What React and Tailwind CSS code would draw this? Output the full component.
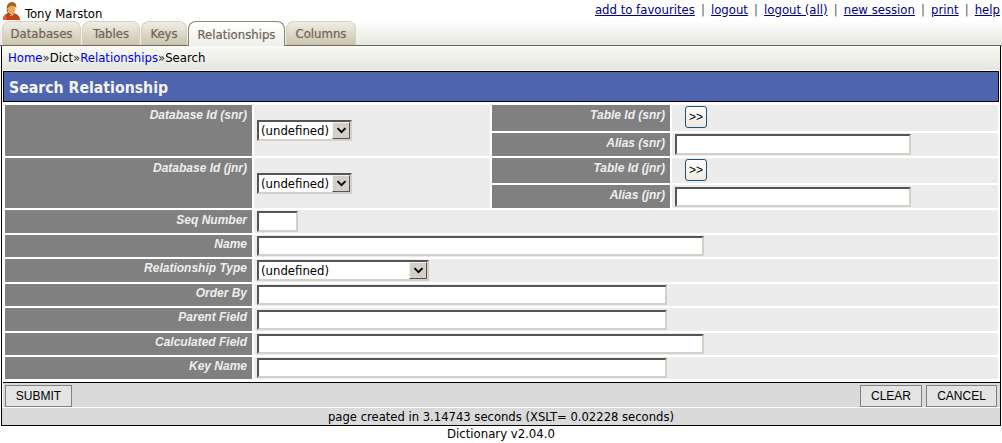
import React from "react";

const F = { fontFamily: '"DejaVu Sans", sans-serif' };

function Label({ children, top = "pt-[3px]", className = "" }) {
  return (
    <div className={`bg-[#808080] text-right pr-[5px] ${top} text-[12px] leading-[14px] font-bold italic text-[#eeeeee] [font-family:'Liberation_Sans',sans-serif] ${className}`}>
      {children}
    </div>
  );
}

function Cell({ children, className = "" }) {
  return <div className={`bg-[#ececec] flex items-center pl-[3px] ${className}`}>{children}</div>;
}

function TextBox({ w, h = 20 }) {
  return (
    <input
      type="text"
      style={{ width: w, height: h }}
      className="block bg-white border-2 border-t-[#555555] border-l-[#555555] border-r-[#d4d0c8] border-b-[#d4d0c8]"
    />
  );
}

function Select({ w, label = "(undefined)" }) {
  return (
    <div style={{ width: w }} className="flex h-[21px] bg-white border-2 border-t-[#555555] border-l-[#555555] border-r-[#d4d0c8] border-b-[#d4d0c8]">
      <select className="appearance-none flex-1 min-w-0 bg-white text-[13px] leading-[17px] text-black pl-[2px] [font-family:'DejaVu_Sans_Condensed','DejaVu_Sans',sans-serif] outline-none">
        <option>{label}</option>
      </select>
      <span className="w-[18px] flex items-center justify-center bg-[#d4d0c8] border border-t-[#f4f2ec] border-l-[#f4f2ec] border-r-[#555555] border-b-[#555555]">
        <svg width="11" height="7" viewBox="0 0 11 7"><path d="M1.5 1.2l4 4 4-4" fill="none" stroke="#000" strokeWidth="1.9" /></svg>
      </span>
    </div>
  );
}

function Popup() {
  return (
    <button className="ml-[10px] mt-[1px] w-[22px] h-[22px] rounded-[3px] border border-[#1c5180] bg-gradient-to-b from-white to-[#ece9e0] text-[12px] leading-none text-black [font-family:'Liberation_Sans',sans-serif]">
      &gt;&gt;
    </button>
  );
}

function Tab({ children, active, w }) {
  return (
    <div
      style={{ width: w }}
      className={`shrink-0 flex items-center justify-center pt-[1px] rounded-t-[8px] border-t border-x text-[13px] [font-family:'DejaVu_Sans_Condensed','DejaVu_Sans',sans-serif] text-[#6e6556] [text-shadow:0_0_1px_rgba(110,101,86,0.45)] ${
        active
          ? "h-[25px] -mb-px z-10 border-[#8c8570] bg-gradient-to-b from-white to-[#f0f0ea]"
          : "h-[24px] border-[#d6d2be] bg-gradient-to-b from-[#f0eee6] to-[#c9c5ae]"
      }`}
    >
      {children}
    </div>
  );
}

function Avatar() {
  return (
    <svg width="17" height="18" viewBox="0 0 17 18" className="shrink-0">
      <path d="M0 18c0-4 2-6 5-7l3 1 3-1c3 1 6 3 6 7z" fill="#c8401a" />
      <path d="M0 18c0-3 1-5 3-6 0 2 0 4 1 6z" fill="#e8622a" />
      <path d="M6 11.5l2.5 4 2.5-4-2.5 1z" fill="#f3d9b0" />
      <path d="M8 13.5l.5 3 .8-3z" fill="#6b1f0c" />
      <ellipse cx="8.5" cy="7" rx="3.8" ry="4.6" fill="#f0a850" />
      <path d="M4 8C2.8 3 6 0 9 0c3.5 0 5 3 4.2 6.5C12.5 4.6 11 3.6 8.5 3.8 6.2 4 5 5.6 4 8z" fill="#a8601c" />
      <path d="M4.2 7.5c0 3 1.5 4.8 3.8 5" fill="none" stroke="#5a2c0c" strokeWidth="0.9" />
    </svg>
  );
}

const Sep = () => <span className="mx-[6.1px] text-[#555555]">|</span>;
const A = ({ children }) => <a className="underline text-[#00008b] cursor-pointer">{children}</a>;

function Row({ label, h, top = "pt-[2px]", children }) {
  return (
    <div className="grid grid-cols-[247px_1fr] gap-x-[2px]" style={{ height: h }}>
      <Label top={top}>{label}</Label>
      <Cell>{children}</Cell>
    </div>
  );
}

function Btn({ w, children }) {
  return (
    <button style={{ width: w }} className="h-[22px] border border-[#808080] bg-[#e4e4e4] text-[12px] text-black [font-family:'Liberation_Sans',sans-serif]">
      {children}
    </button>
  );
}

export default function App() {
  const cond = "[font-family:'DejaVu_Sans_Condensed','DejaVu_Sans',sans-serif]";
  return (
    <div style={F} className="w-[1002px] h-[443px] bg-white overflow-hidden text-black">
      <div className="h-[21px] flex items-start justify-between pl-[3px] pr-[2px]">
        <div className="flex items-start gap-[5px] pt-[2px]">
          <Avatar />
          <span className={`text-[13px] leading-[18px] mt-[3px] ${cond}`}>Tony Marston</span>
        </div>
        <div className={`text-[13px] leading-[17px] mt-px text-[#00008b] ${cond}`}>
          <A>add to favourites</A><Sep /><A>logout</A><Sep /><A>logout (all)</A><Sep /><A>new session</A><Sep /><A>print</A><Sep /><A>help</A>
        </div>
      </div>

      <div className="h-[25px] pl-[2px] flex items-end gap-[1px] border-b border-[#6e6a58] bg-gradient-to-b from-white to-[#e4e6de]">
        <Tab w={79}>Databases</Tab>
        <Tab w={58}>Tables</Tab>
        <Tab w={46}>Keys</Tab>
        <Tab w={97} active>Relationships</Tab>
        <Tab w={70}>Columns</Tab>
      </div>

      <div className="ml-px w-[1000px] h-[380px] border-x border-b border-black flex flex-col bg-white">
        <div className={`h-[24px] shrink-0 flex items-center pl-[6px] bg-gradient-to-b from-[#fafaf6] to-[#e4e6de] text-[13px] ${cond}`}>
          <a className="text-[#0000ee]">Home</a><span className="text-[#333]">»</span>Dict<span className="text-[#333]">»</span><a className="text-[#0000ee]">Relationships</a><span className="text-[#333]">»</span>Search
        </div>

        <div className={`h-[31px] shrink-0 mt-[1px] ml-[1px] mr-[1px] flex items-center pl-[5px] pt-[3px] bg-[#4f64ae] border border-black text-[15.7px] font-bold text-[#f4f4f4] ${cond}`}>
          Search Relationship
        </div>

        <div className="flex-1 flex flex-col gap-[2px] pl-[3px] pr-[2px] pt-[3px]">
          {[
            ["Database Id (snr)", "Table Id (snr)", "Alias (snr)", 26, 21],
            ["Database Id (jnr)", "Table Id (jnr)", "Alias (jnr)", 25, 20],
          ].map(([a, b, c, h1, ih]) => (
            <div key={a} className="grid grid-cols-[247px_236px_178px_1fr] gap-x-[2px] gap-y-[2px]" style={{ gridTemplateRows: `${h1}px 23px` }}>
              <Label className="row-span-2">{a}</Label>
              <Cell className="row-span-2"><Select w={95} /></Cell>
              <Label>{b}</Label>
              <Cell className="!items-start"><Popup /></Cell>
              <Label>{c}</Label>
              <Cell><TextBox w={236} h={ih} /></Cell>
            </div>
          ))}
          <Row label="Seq Number" h={23} top="pt-[3px]"><TextBox w={41} h={21} /></Row>
          <Row label="Name" h={22}><TextBox w={447} /></Row>
          <Row label="Relationship Type" h={23}><Select w={172} /></Row>
          <Row label="Order By" h={22}><TextBox w={410} /></Row>
          <Row label="Parent Field" h={23}><TextBox w={410} /></Row>
          <Row label="Calculated Field" h={22}><TextBox w={447} /></Row>
          <Row label="Key Name" h={22}><TextBox w={410} /></Row>
        </div>

        <div className="shrink-0 h-[25px] ml-[1px] flex items-start justify-between pl-[2px] pr-[3px] pt-[2px] bg-[#dadada] border-t border-black">
          <Btn w={67}>SUBMIT</Btn>
          <div className="flex gap-[4px]">
            <Btn w={62}>CLEAR</Btn>
            <Btn w={71}>CANCEL</Btn>
          </div>
        </div>
        <div className={`shrink-0 h-[18px] border-t border-white bg-[#dadada] text-center text-[12.9px] leading-[17px] ${cond}`}>
          page created in 3.14743 seconds (XSLT= 0.02228 seconds)
        </div>
      </div>

      <div className={`text-center text-[13px] leading-[15px] ${cond}`}>Dictionary v2.04.0</div>
    </div>
  );
}
